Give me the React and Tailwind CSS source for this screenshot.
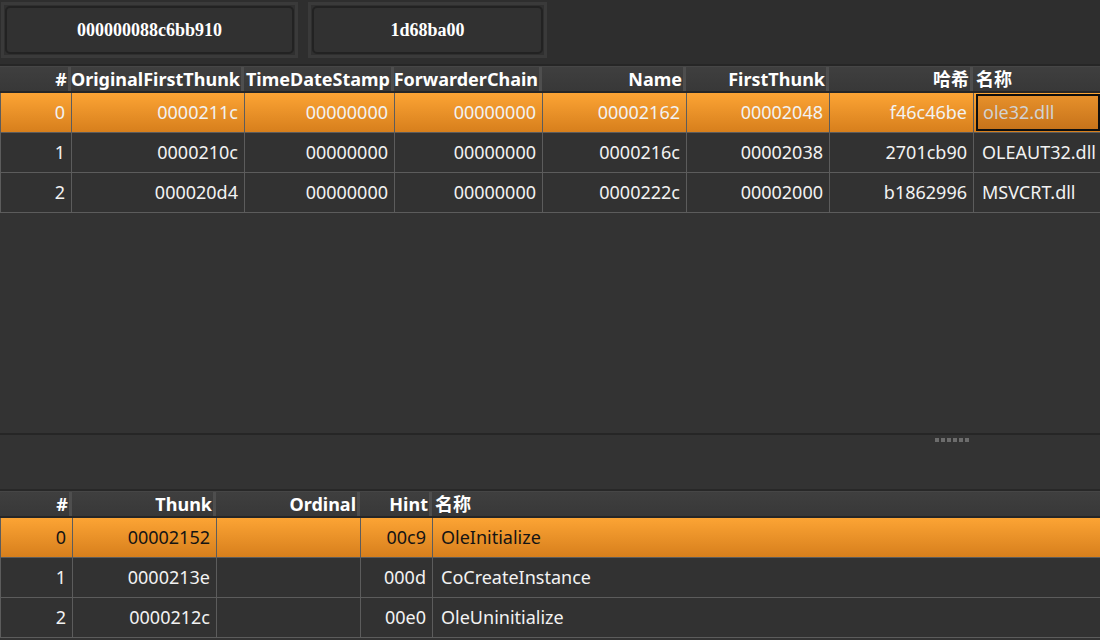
import React from 'react'

const topCols = [
  { w: 'w-[71px]', label: '#' },
  { w: 'w-[173px]', label: 'OriginalFirstThunk' },
  { w: 'w-[150px]', label: 'TimeDateStamp' },
  { w: 'w-[148px]', label: 'ForwarderChain' },
  { w: 'w-[144px]', label: 'Name' },
  { w: 'w-[143px]', label: 'FirstThunk' },
  { w: 'w-[144px]', label: '哈希' },
  { w: 'flex-1', label: '名称', left: true },
]

const topRows = [
  ['0', '0000211c', '00000000', '00000000', '00002162', '00002048', 'f46c46be', 'ole32.dll'],
  ['1', '0000210c', '00000000', '00000000', '0000216c', '00002038', '2701cb90', 'OLEAUT32.dll'],
  ['2', '000020d4', '00000000', '00000000', '0000222c', '00002000', 'b1862996', 'MSVCRT.dll'],
]

const bottomCols = [
  { w: 'w-[72px]', label: '#' },
  { w: 'w-[144px]', label: 'Thunk' },
  { w: 'w-[144px]', label: 'Ordinal' },
  { w: 'w-[72px]', label: 'Hint' },
  { w: 'flex-1', label: '名称', left: true },
]

const bottomRows = [
  ['0', '00002152', '', '00c9', 'OleInitialize'],
  ['1', '0000213e', '', '000d', 'CoCreateInstance'],
  ['2', '0000212c', '', '00e0', 'OleUninitialize'],
]

const font = { fontFamily: '"Noto Sans", "Noto Sans CJK SC", sans-serif' }

const HeaderRow = ({ cols }) => (
  <div className="flex h-[27px] shrink-0 border-t border-t-[#464646] border-b-2 border-b-[#262626] bg-gradient-to-b from-[#3f3f3f] to-[#383838]">
    {cols.map((c, i) => (
      <div
        key={i}
        className={`${c.w} shrink-0 flex items-center h-full text-[18px] font-bold text-white leading-none whitespace-nowrap overflow-hidden ${
          c.left ? 'justify-start pl-[3px]' : 'justify-end pr-[1px] border-r-[3px] border-r-[#4e4e4e]'
        }`}
      >
        {c.label}
      </div>
    ))}
  </div>
)

const BodyRow = ({ cols, cells, selected, darkText, editLast }) => (
  <div
    className={`flex h-[40px] shrink-0 border-b border-b-[#5c5c5c] border-l border-l-[#5c5c5c] ${
      selected ? 'bg-gradient-to-b from-[#fca434] to-[#d77f1c]' : 'bg-[#323232]'
    }`}
  >
    {cols.map((c, i) => {
      const last = i === cols.length - 1
      if (last && editLast) {
        return (
          <div key={i} className={`${c.w} shrink-0 h-full pl-[2px] py-[1px]`}>
            <div className="h-full border-2 border-[#0e0e0e] bg-gradient-to-b from-[#e6902b] to-[#c7731a] flex items-center pl-[5px] text-[18px] text-[#d2d2d2]">
              {cells[i]}
            </div>
          </div>
        )
      }
      return (
        <div
          key={i}
          className={`${c.w} shrink-0 h-full flex items-center text-[18px] ${
            darkText ? 'text-[#141414]' : 'text-[#f2f2f2]'
          } ${last ? 'justify-start pl-[8px]' : 'justify-end pr-[6px] border-r border-r-[#5c5c5c]'}`}
        >
          {cells[i]}
        </div>
      )
    })}
  </div>
)

const TopButton = ({ width, text }) => (
  <div className={`${width} h-[56px] border-[3px] border-[#3a3a3a] bg-[#2f2f2f] p-[1px]`}>
    <div
      className="h-full rounded-[5px] border-2 border-[#222222] bg-[#313131] flex items-center justify-center text-[18px] font-bold text-white"
      style={{ fontFamily: '"Liberation Serif", serif' }}
    >
      {text}
    </div>
  </div>
)

export default function App() {
  return (
    <div className="w-[1100px] h-[640px] overflow-hidden bg-[#333333] flex flex-col" style={font}>
      {/* Top bar */}
      <div className="h-[66px] shrink-0 bg-[#2e2e2e] flex gap-[10px] pl-[1px] pt-[2px] border-b-2 border-b-[#262626]">
        <TopButton width="w-[297px]" text="000000088c6bb910" />
        <TopButton width="w-[239px]" text="1d68ba00" />
      </div>

      {/* Import descriptors */}
      <div className="h-[367px] shrink-0 flex flex-col bg-[#333333]">
        <HeaderRow cols={topCols} />
        {topRows.map((r, i) => (
          <BodyRow key={i} cols={topCols} cells={r} selected={i === 0} editLast={i === 0} />
        ))}
      </div>

      {/* Splitter */}
      <div className="h-[2px] shrink-0 bg-[#262626]" />

      {/* Thunks */}
      <div className="flex-1 flex flex-col bg-[#333333]">
        <div className="h-[56px] shrink-0 border-b-2 border-b-[#282828]">
          <div className="flex gap-[2px] pl-[935px] pt-[3px]">
            {[0, 1, 2, 3, 4, 5].map((d) => (
              <div key={d} className="w-[4px] h-[4px] bg-[#6c6c6c]" />
            ))}
          </div>
        </div>
        <HeaderRow cols={bottomCols} />
        {bottomRows.map((r, i) => (
          <BodyRow key={i} cols={bottomCols} cells={r} selected={i === 0} darkText={i === 0} />
        ))}
      </div>
    </div>
  )
}
